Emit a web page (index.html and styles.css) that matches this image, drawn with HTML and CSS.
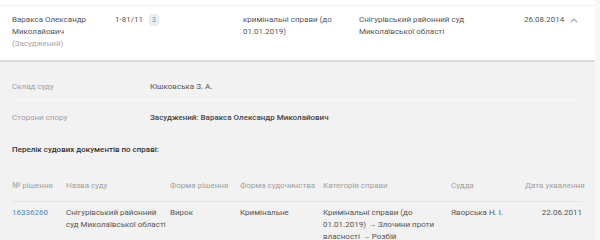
FILE: index.html
```html
<!DOCTYPE html>
<html lang="uk">
<head>
<meta charset="utf-8">
<title>Справа 1-81/11</title>
<link rel="stylesheet" href="styles.css">
</head>
<body>
<div class="page">
  <div class="case-row">
    <div class="c-name">Варакса Олександр<br>Миколайович<br><span class="role">(Засуджений)</span></div>
    <div class="c-num">1-81/11 <span class="badge">3</span></div>
    <div class="c-cat">кримінальні справи (до<br>01.01.2019)</div>
    <div class="c-court">Снігурівський районний суд<br>Миколаївської області</div>
    <div class="c-date">26.08.2014
      <svg class="caret" width="8" height="6" viewBox="0 0 8 6"><path d="M1 5 L4 2 L7 5" fill="none" stroke="#9aa7b3" stroke-width="1.1"/></svg>
    </div>
  </div>
  <div class="details">
    <div class="info-row first">
      <div class="info-label">Склад суду</div>
      <div class="info-value">Кішковська З. А.</div>
    </div>
    <div class="info-row second">
      <div class="info-label">Сторони спору</div>
      <div class="info-value strong">Засуджений: Варакса Олександр Миколайович</div>
    </div>
    <div class="docs-title">Перелік судових документів по справі:</div>
    <div class="docs">
      <div class="docs-head">
        <div>№ рішення</div>
        <div>Назва суду</div>
        <div>Форма рішення</div>
        <div>Форма судочинства</div>
        <div>Категорія справи</div>
        <div>Судда</div>
        <div class="right">Дата ухвалення</div>
      </div>
      <div class="docs-row">
        <div class="link">16336260</div>
        <div>Снігурівський районний<br>суд Миколаївської області</div>
        <div>Вирок</div>
        <div>Кримінальне</div>
        <div>Кримінальні справи (до<br>01.01.2019) → Злочини проти<br>власності → Розбій</div>
        <div>Яворська Н. І.</div>
        <div class="right">22.06.2011</div>
      </div>
    </div>
  </div>
</div>
</body>
</html>
```
FILE: styles.css
```css
html, body {
  margin: 0;
  padding: 0;
}
body {
  background: #f7f7f7;
  font-family: Roboto, "Noto Sans", sans-serif;
  font-size: 8px;
  line-height: 12px;
  color: #555;
}
.page {
  width: 595px;
  background: #fff;
  padding-top: 5px;
}
.case-row {
  border-top: 1px solid #eeeeee;
  display: grid;
  grid-template-columns: 103px 128px 116px 165px 1fr;
  padding: 8px 0 10px 12px;
  height: 36px;
  border-bottom: 2px solid #dcdcdc;
  white-space: nowrap;
}
.role {
  color: #a8a8a8;
}
.badge {
  display: inline-block;
  margin-left: 4px;
  background: #e9f0f5;
  color: #6b97b8;
  font-size: 7px;
  line-height: 12px;
  padding: 0 3px;
  border-radius: 2px;
  vertical-align: top;
}
.c-date {
  display: flex;
  align-items: flex-start;
  gap: 6px;
}
.caret {
  margin-top: 3px;
}
.details {
  background: #f2f2f2;
  padding: 9px 13px 0 12px;
  height: 169px;
  overflow: hidden;
}
.info-row {
  display: grid;
  grid-template-columns: 138px 1fr;
}
.info-row.first {
  padding: 10px 0 7px;
  border-bottom: 1px solid #f8f8f8;
}
.info-row.second {
  padding-top: 11px;
}
.info-label {
  color: #a0a0a0;
}
.info-value {
  color: #555;
}
.info-value.strong {
  color: #444;
  font-weight: 500;
}
.docs-title {
  margin-top: 20px;
  color: #333;
  font-weight: 500;
}
.docs {
  margin-top: 24px;
}
.docs-head, .docs-row {
  display: grid;
  grid-template-columns: 54px 104px 70px 83px 128px 74px 1fr;
  white-space: nowrap;
}
.docs-head {
  color: #a0a0a0;
  padding-bottom: 9px;
  border-bottom: 1px solid #e4e4e4;
}
.docs-row {
  padding-top: 5px;
  color: #555;
}
.link {
  color: #3f8fc4;
}
.right {
  text-align: right;
}
```
